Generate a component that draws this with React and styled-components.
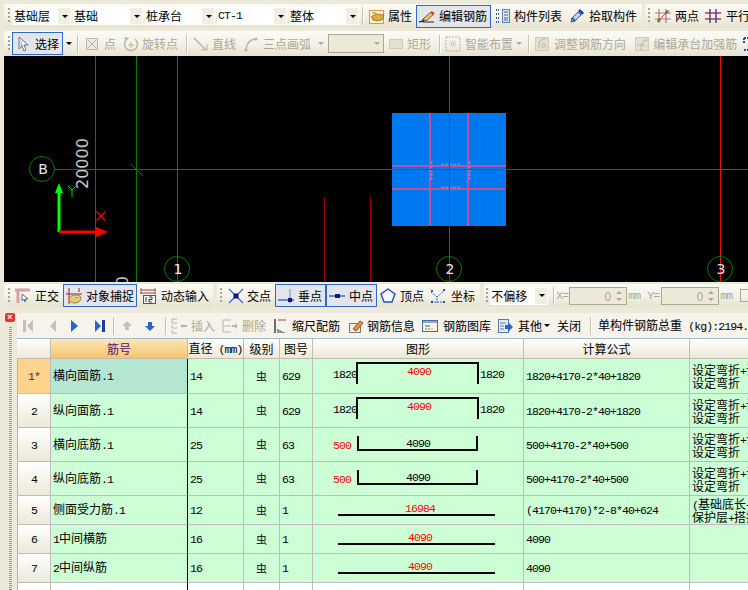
import React from "react";
import styled, { createGlobalStyle } from "styled-components";

const GlobalStyle = createGlobalStyle`
  html, body { margin: 0; padding: 0; background: #ece9d8; }
  body { font-family: "Noto Sans CJK SC", "Liberation Sans", sans-serif; font-size: 12px; color: #000; }
`;

const Page = styled.div`
  width: 748px;
  height: 590px;
  overflow: hidden;
  display: flex;
  flex-direction: column;
  background: #ece9d8;
`;

const Band = styled.div`
  height: ${(p) => p.$h}px;
  padding: ${(p) => p.$top}px 0 0 4px;
  box-sizing: border-box;
  display: flex;
  gap: ${(p) => p.$gap || 3}px;
  flex: none;
  overflow: hidden;
`;

const Group = styled.div`
  height: ${(p) => p.$h || 24}px;
  flex: ${(p) => (p.$fill ? 1 : "none")};
  min-width: 0;
  display: flex;
  align-items: center;
  padding: 0 ${(p) => p.$pr || 0}px 0 ${(p) => p.$pl ?? 4}px;
  border-radius: 3px 0 0 3px;
  background: linear-gradient(#fbfaf5, #f3f1e7 55%, #e6e2cf);
  white-space: nowrap;
  line-height: 1;
  overflow: hidden;
`;

const Grip = styled.i`
  flex: none;
  width: 2px;
  height: 16px;
  background: repeating-linear-gradient(#a8a493 0 2px, #fff0 2px 4px);
`;

const Sep = styled.i`
  flex: none;
  width: 1px;
  height: 18px;
  margin-left: ${(p) => p.$ml}px;
  background: #c5c2b2;
  box-shadow: 1px 0 0 #fff;
`;

const Tool = styled.span`
  flex: none;
  display: inline-flex;
  align-items: center;
  box-sizing: border-box;
  height: ${(p) => (p.$active ? "23px" : "auto")};
  gap: ${(p) => p.$gap ?? 4}px;
  margin-left: ${(p) => p.$ml || 0}px;
  padding: ${(p) => (p.$active ? `0 ${p.$pr || 3}px 0 ${p.$pl || 2}px` : 0)};
  color: ${(p) => (p.$off ? "#aca899" : "#000")};
  ${(p) => p.$active && "border: 1px solid #316ac5; background: #e3e5ea;"}
`;

const Caret = styled.i`
  flex: none;
  width: 0;
  height: 0;
  margin: 0 ${(p) => p.$mx ?? 2}px 0 ${(p) => (p.$ml || 0) + 2}px;
  border: 3px solid transparent;
  border-top: 3px solid ${(p) => (p.$off ? "#aca899" : "#000")};
  border-bottom: 0;
`;

const Combo = styled.span`
  flex: none;
  box-sizing: border-box;
  width: ${(p) => p.$w}px;
  height: 18px;
  margin-left: ${(p) => p.$ml || 0}px;
  display: flex;
  align-items: center;
  justify-content: space-between;
  background: #fff;
  padding-left: 1px;
  font-size: 12px;
`;

const ComboBtn = styled.span`
  flex: none;
  width: 12px;
  height: 16px;
  margin-right: 1px;
  background: #f0eee2;
  display: flex;
  align-items: center;
  justify-content: center;
`;

const OffCombo = styled.span`
  flex: none;
  box-sizing: border-box;
  width: 56px;
  height: 19px;
  margin-left: ${(p) => p.$ml || 0}px;
  border: 1px solid #aca899;
  background: #ece9d8;
  display: flex;
  align-items: center;
  justify-content: flex-end;
  padding-right: 1px;
`;

const Latin = styled.span`
  font-family: "Liberation Mono", monospace;
  font-size: 11.5px;
  letter-spacing: -0.9px;
`;

const Spin = styled.span`
  flex: none;
  box-sizing: border-box;
  width: 58px;
  height: 18px;
  margin-left: ${(p) => p.$ml}px;
  border: 1px solid #aca899;
  background: #ece9d8;
  color: #aca899;
  display: flex;
  align-items: center;
  justify-content: flex-end;
  gap: 5px;
  padding-right: 4px;
`;

const SpinBtns = styled.span`
  display: flex;
  flex-direction: column;
  gap: 4px;
`;

const SpinUp = styled.i`
  display: block;
  width: 0;
  height: 0;
  border: 3px solid transparent;
  border-bottom: 3px solid #aca899;
  border-top: 0;
`;

const SpinDown = styled(SpinUp)`
  transform: scaleY(-1);
`;

const OffLabel = styled(Latin)`
  flex: none;
  color: #aca899;
  margin-left: ${(p) => p.$ml || 0}px;
`;

const CheckBox = styled.i`
  flex: none;
  width: 11px;
  height: 11px;
  margin-left: ${(p) => p.$ml}px;
  border: 1px solid #aca899;
`;

const Canvas = styled.svg`
  display: block;
  flex: none;
  margin-left: 4px;
`;

const Panel = styled.div`
  flex: 1;
  min-height: 0;
  display: flex;
`;

const Side = styled.div`
  width: 17px;
  flex: none;
  display: flex;
  flex-direction: column;
  align-items: center;
  padding: 3px 0 0 3px;
  box-sizing: border-box;
  gap: 5px;
`;

const CloseBox = styled.span`
  width: 10px;
  height: 9px;
  border-radius: 2px;
  background: #e8352a;
  color: #fff;
  font: bold 9px/9px "Liberation Sans", sans-serif;
  text-align: center;
`;

const SideGrip = styled.i`
  flex: 1;
  width: 3px;
  background: repeating-linear-gradient(#9c9888 0 1px, #fff0 1px 2px);
`;

const Main = styled.div`
  flex: 1;
  min-width: 0;
  display: flex;
  flex-direction: column;
  margin-top: 3px;
  background: #f5f3ea;
`;

const PanelBar = styled.div`
  height: 25px;
  flex: none;
  display: flex;
  align-items: center;
  padding-left: 3px;
  white-space: nowrap;
  overflow: hidden;
  line-height: 1;
`;

const Table = styled.div`
  flex: 1;
  display: grid;
  grid-template-columns: 34px 137px 56px 36px 33px 211px 166px 300px;
  grid-template-rows: 20px 35px 34px 34px 34px 29px 29px 29px 34px;
  background: #fff;
  border-top: 1px solid #a9b8c6;
  overflow: hidden;
  line-height: 1;
`;

const HeadCell = styled.div`
  box-sizing: border-box;
  display: flex;
  align-items: center;
  justify-content: center;
  border-right: 1px solid #c0bdae;
  border-bottom: 1px solid #c0bdae;
  color: ${(p) => (p.$on ? "#5a0a80" : "#000")};
  background: ${(p) =>
    p.$on ? "linear-gradient(#fbe6b8, #f6c56e)" : "linear-gradient(#fff, #ece9d8)"};
`;

const RowHead = styled.div`
  box-sizing: border-box;
  display: flex;
  align-items: center;
  justify-content: center;
  border-left: 1px solid #b5b5b5;
  border-right: 1px solid #bdbdbd;
  border-bottom: 1px solid #bdbdbd;
  color: ${(p) => (p.$on ? "#5a0a80" : "#000")};
  background: ${(p) => (p.$on ? "#fdd48a" : "linear-gradient(#fff, #ece9d8)")};
`;

const Cell = styled.div`
  box-sizing: border-box;
  display: flex;
  align-items: center;
  justify-content: ${(p) => (p.$center ? "center" : "flex-start")};
  padding-left: ${(p) => p.$pl ?? 2}px;
  border-right: 1px solid ${(p) => (p.$edge ? "#000" : "#bdbdbd")};
  border-bottom: 1px solid #bdbdbd;
  background: ${(p) => (p.$sel ? "#b4e6d2" : p.$blank ? "#fff" : "#ccffd6")};
  overflow: hidden;
  white-space: nowrap;
`;

const Grade = styled.span`
  font-size: 11px;
  line-height: 1;
`;

const NoteLines = styled.div`
  display: flex;
  flex-direction: column;
`;

const NoteLine = styled.span`
  display: block;
  height: 13px;
  line-height: 13px;
  white-space: nowrap;
`;

const FigureSvg = styled.svg`
  display: block;
  align-self: flex-start;
  flex: none;
`;

const Mix = ({ children }) => (
  <span>
    {String(children)
      .split(/([\x00-\x7f]+)/)
      .filter(Boolean)
      .map((s, i) => (/^[\x00-\x7f]/.test(s) ? <Latin key={i}>{s}</Latin> : <span key={i}>{s}</span>))}
  </span>
);

const Ico = ({ children, w = 16, h = 16 }) => (
  <svg width={w} height={h} viewBox="0 0 16 16" style={{ flex: "none", display: "block" }}>
    {children}
  </svg>
);

const G = "#b9b6a8";

const icons = {
  attr: (
    <Ico>
      <rect x="0.5" y="2.5" width="14" height="13" fill="#fdf2cf" stroke="#e0953a" />
      <path d="M2 9l5-3 8 1-2 5-6 1z" fill="#e2b040" stroke="#8a6a20" strokeWidth="0.8" />
      <path d="M3 5h4M3 12h3" stroke="#b07820" />
    </Ico>
  ),
  edit: (
    <Ico>
      <path d="M0 14c2-1 3-1 5 0l3 0h7" stroke="#222" strokeWidth="1.2" fill="none" />
      <path d="M4 11l8-7 3 2-8 7z" fill="#eec070" stroke="#7a5a30" />
      <path d="M12 4l3 2" stroke="#d04040" strokeWidth="2.4" />
      <path d="M4 11l-2 3 4-1z" fill="#333" />
    </Ico>
  ),
  list: (
    <Ico>
      <path d="M1 2h3M1 6h3M1 10h3M1 14h3" stroke="#3a5a80" strokeWidth="2" strokeDasharray="1 1" />
      <rect x="7.5" y="1.5" width="7" height="13" fill="#dbe8f8" stroke="#5a80b0" />
      <path d="M9 4h4M9 7h4M9 10h4M9 12h4" stroke="#3a60a0" />
    </Ico>
  ),
  picker: (
    <Ico>
      <path d="M2 14l1-4 6-6 3 3-6 6z" fill="#bcd4f4" stroke="#2a56b0" />
      <path d="M9 3l2-2 4 4-2 2z" fill="#1a3f9a" />
      <path d="M3 10l3 3" stroke="#2a56b0" strokeWidth="2" />
    </Ico>
  ),
  two: (
    <Ico>
      <path d="M0 5h16M0 11h16" stroke="#8a8ab0" />
      <path d="M4 1v14M11 1v14" stroke="#c85050" />
      <path d="M2 14L14 2" stroke="#c04040" />
      <circle cx="4" cy="12" r="1.6" fill="#3a8a2a" />
      <circle cx="12" cy="4" r="1.6" fill="#3a8a2a" />
    </Ico>
  ),
  parallel: (
    <Ico>
      <path d="M0 5h16M0 11h16" stroke="#d03040" strokeWidth="1.4" />
      <path d="M5 1v14M11 1v14" stroke="#3040a0" strokeWidth="1.4" />
    </Ico>
  ),
  cursor: (
    <Ico>
      <path d="M5 1v12l3-3 2 5 2-1-2-5h4z" fill="#fff" stroke="#6a7080" />
      <path d="M7 5v5l2-1" stroke="#8aa0c0" fill="none" />
    </Ico>
  ),
  point: (
    <Ico>
      <rect x="2.5" y="2.5" width="11" height="11" fill="#eceae0" stroke={G} />
      <path d="M4 4l8 8M12 4l-8 8" stroke={G} />
    </Ico>
  ),
  rotate: (
    <Ico>
      <path d="M3 4A6.5 6.5 0 1 0 12 3" fill="none" stroke={G} strokeWidth="1.5" />
      <path d="M1 1l2 4 3-3z" fill={G} />
      <path d="M8 6v6M5 9h6" stroke={G} />
    </Ico>
  ),
  line: (
    <Ico>
      <path d="M1 2l12 12" stroke={G} strokeWidth="1.5" />
      <path d="M14 8v6H8" stroke={G} fill="none" />
    </Ico>
  ),
  arc: (
    <Ico>
      <path d="M3 14C3 8 7 3 13 3" stroke={G} strokeWidth="1.5" fill="none" />
      <circle cx="3" cy="14" r="1.6" fill={G} />
      <circle cx="13" cy="3" r="1.6" fill={G} />
    </Ico>
  ),
  rect: (
    <Ico>
      <rect x="1.5" y="3.5" width="13" height="9" fill="#e3e0d2" stroke="#cfccbd" />
    </Ico>
  ),
  smart: (
    <Ico>
      <rect x="1" y="1" width="14" height="14" fill="none" stroke={G} strokeDasharray="2 1" />
      <path d="M8 4v8M4 8h8M5 5l6 6M11 5l-6 6" stroke={G} strokeDasharray="1 1" />
    </Ico>
  ),
  adjust: (
    <Ico>
      <rect x="1.5" y="1.5" width="13" height="13" fill="#e3e0d2" stroke="#cfccbd" />
      <path d="M5 12V6l4-3h3M8 12a3 3 0 0 0 3-4H8v3" fill="none" stroke={G} />
    </Ico>
  ),
  strong: (
    <Ico>
      <rect x="1.5" y="1.5" width="13" height="13" fill="#e3e0d2" stroke="#cfccbd" />
      <path d="M14 4C9 4 7 7 7 14M3 9h8" fill="none" stroke={G} />
    </Ico>
  ),
  corner: (
    <Ico>
      <path d="M2 2h5M2 2v5M2 14h5" stroke="#2a50c0" strokeWidth="2" strokeDasharray="2 1" fill="none" />
    </Ico>
  ),
  ortho: (
    <Ico>
      <path d="M0 2h15M3 2v13" stroke="#d8a0a0" strokeWidth="3" />
      <path d="M7 6v7l2-2 1 3 1-1-1-2h3z" fill="#fff" stroke="#5a6a8a" />
    </Ico>
  ),
  snap: (
    <Ico>
      <path d="M3 0v16M13 0v4M0 6h16" stroke="#8a2a2a" />
      <path d="M3 11c1-4 7-5 11-3 2 3 0 7-5 7-3 0-6-1-6-4z" fill="#e6c878" stroke="#a08030" />
      <path d="M7 10c2-1 4-2 6-1" stroke="#fff" />
    </Ico>
  ),
  dyn: (
    <Ico>
      <path d="M0 2h16M0 5h16" stroke="#a04040" />
      <path d="M1 0v6M15 0v6" stroke="#777" />
      <rect x="3.5" y="7.5" width="12" height="8" fill="#fff" stroke="#555" />
      <path d="M6 9v5M9 9h3v2.5H9V14h3" stroke="#333" fill="none" />
    </Ico>
  ),
  cross: (
    <Ico>
      <path d="M1 1l14 14M15 1L1 15" stroke="#2e6fc8" strokeWidth="1.2" />
      <rect x="5.5" y="5.5" width="5" height="5" fill="#14148c" />
    </Ico>
  ),
  perp: (
    <Ico>
      <path d="M0 12h16" stroke="#2e6fc8" strokeWidth="1.4" />
      <path d="M12 1v14" stroke="#5a8fd0" />
      <rect x="10" y="10" width="4" height="4" fill="#14148c" />
    </Ico>
  ),
  mid: (
    <Ico>
      <path d="M0 8h16" stroke="#2e6fc8" strokeWidth="1.4" />
      <rect x="6" y="6" width="5" height="4" fill="#14148c" />
    </Ico>
  ),
  vertex: (
    <Ico>
      <path d="M8 1l7 5-3 8H4L1 6z" fill="#f4f7ff" stroke="#1f4fb0" strokeWidth="1.4" />
    </Ico>
  ),
  coord: (
    <Ico>
      <path d="M1 4l6 5v6M7 9l8-7M1 14h13" stroke="#2e6fc8" strokeDasharray="2 1" fill="none" />
      <circle cx="2" cy="3" r="1" fill="#14148c" />
      <circle cx="14" cy="2" r="1" fill="#14148c" />
      <circle cx="2" cy="14" r="1" fill="#14148c" />
      <circle cx="14" cy="14" r="1" fill="#14148c" />
    </Ico>
  ),
  first: (
    <Ico>
      <path d="M3 2h3v12H3z" fill="#c4c2b6" />
      <path d="M13 2v12L7 8z" fill="#c4c2b6" />
    </Ico>
  ),
  prev: (
    <Ico>
      <path d="M11 2v12L5 8z" fill="#c4c2b6" />
    </Ico>
  ),
  next: (
    <Ico>
      <path d="M4 2v12l7-6z" fill="#2a62d0" />
    </Ico>
  ),
  last: (
    <Ico>
      <path d="M3 2v12l6-6z" fill="#2a62d0" />
      <path d="M10 2h3v12h-3z" fill="#1a3f9a" />
    </Ico>
  ),
  up: (
    <Ico>
      <path d="M8 3l5 5h-3v4H6V8H3z" fill="#c4c2b6" />
    </Ico>
  ),
  down: (
    <Ico>
      <path d="M8 13l5-5h-3V4H6v4H3z" fill="#2f63c8" />
    </Ico>
  ),
  insert: (
    <Ico>
      <path d="M6 1H1v4h5M1 7v3h5M6 15H1v-3" fill="none" stroke={G} />
      <path d="M9 8l3-2v4zM12 7h4v2h-4z" fill={G} />
    </Ico>
  ),
  remove: (
    <Ico>
      <path d="M1 2h8M1 8h8M1 14h8M1 2v12" fill="none" stroke={G} />
      <path d="M10 7h3V5l3 3-3 3V9h-3z" fill={G} />
    </Ico>
  ),
  scale: (
    <Ico>
      <path d="M2 1v14" stroke="#333" strokeWidth="1.4" />
      <path d="M5 2h8" stroke="#a04040" />
      <path d="M5 15v-4M7 15v-3M9 15v-2M11 15v-1" stroke="#555" strokeWidth="1.2" />
    </Ico>
  ),
  info: (
    <Ico>
      <rect x="1.5" y="5.5" width="11" height="9" fill="#f4efe0" stroke="#777" />
      <path d="M5 11l7-8 3 2-7 8z" fill="#e09040" stroke="#8a5a20" />
    </Ico>
  ),
  lib: (
    <Ico>
      <rect x="0.5" y="2.5" width="15" height="11" fill="#f6f6ef" stroke="#4a6aa0" />
      <path d="M1 3h14v2H1z" fill="#8aa8d8" />
      <path d="M3 8h5" stroke="#555" />
      <path d="M3 11h2" stroke="#d03030" />
      <path d="M6 11h2" stroke="#30a030" />
      <path d="M9 11h2" stroke="#d0a030" />
    </Ico>
  ),
  other: (
    <Ico>
      <rect x="1.5" y="1.5" width="10" height="13" fill="#e4ecf8" stroke="#5a7ab0" />
      <path d="M3 5h6M3 8h4M3 11h4" stroke="#5a7ab0" />
      <path d="M8 7h3V4l5 5-5 5v-3H8z" fill="#2f63c8" />
    </Ico>
  ),
};

const Label = ({ children }) => <span>{children}</span>;

const CanvasDrawing = () => {
  const bubble = (cx, cy, t) => (
    <g key={t}>
      <circle cx={cx} cy={cy} r="12.5" fill="none" stroke="#0a7a0a" />
      <text x={cx + 1} y={cy + 5} textAnchor="middle" fontFamily="DejaVu Sans" fontSize="14" fill="#e8e8e8">
        {t}
      </text>
    </g>
  );
  return (
    <Canvas width="744" height="226" viewBox="4 56 744 226">
      <rect x="4" y="56" width="744" height="226" fill="#000" />
      <path d="M95.5 56v226M136.5 56v226M54 169.5h123" stroke="#0a7a0a" shapeRendering="crispEdges" />
      <path d="M131 164l12 12" stroke="#0a7a0a" />
      <path d="M324.5 197v85M370.5 197v85" stroke="#a00000" shapeRendering="crispEdges" />
      <rect x="392" y="113" width="114" height="113" fill="#0078f0" />
      <path d="M430 113v113M468 113v113M392 166h114M392 189h113" stroke="#c24f9e" strokeWidth="2" />
      <path d="M431.5 161v19M469.5 161v19M441 164.5h19M441 187.5h19" stroke="#7f87a8" strokeWidth="2" strokeDasharray="3 1" />
      <path d="M177.5 56v226M449.5 56v226M720.5 56v226M177 169.5h571" stroke="#e81010" shapeRendering="crispEdges" />
      {bubble(42, 169, "B")}
      {bubble(177, 269, "1")}
      {bubble(449, 269, "2")}
      {bubble(720, 269, "3")}
      <text transform="translate(88 189) rotate(-90)" fontFamily="DejaVu Sans" fontSize="16" fill="#c8c8c8">
        20000
      </text>
      <text transform="translate(128 276) rotate(-90)" textAnchor="end" fontFamily="DejaVu Sans" fontSize="16" fill="#c8c8c8">
        20000
      </text>
      <path d="M59 232v-40" stroke="#00ff00" strokeWidth="3" />
      <path d="M59 183l4 10h-8z" fill="#00ff00" />
      <path d="M68 186l4 4 5-5M72 190v7" stroke="#00e000" fill="none" />
      <path d="M59 232h37" stroke="#ff0000" strokeWidth="3" />
      <path d="M96 227l12 5-12 5z" fill="#ff0000" />
      <path d="M96.5 211.5l9 9M105.5 211.5l-9 9" stroke="#ff0000" strokeWidth="1.2" />
    </Canvas>
  );
};

const SvgLabel = ({ x, y, red, anchor, children }) => (
  <text
    x={x}
    y={y}
    textAnchor={anchor || "middle"}
    fontFamily="Liberation Mono, monospace"
    fontSize="11.5"
    letterSpacing="-0.9"
    fill={red ? "#f00" : "#000"}
  >
    {children}
  </text>
);

// coordinates are relative to the figure cell
const Figure = ({ kind, mid, midRed, side, sideRed }) => (
  <FigureSvg width="210" height="34">
    {kind === "top" && (
      <>
        <path d="M44 25V4h121v21" fill="none" stroke="#000" strokeWidth="2" />
        <SvgLabel x={20} y={19} anchor="start">{side}</SvgLabel>
        <SvgLabel x={167} y={19} anchor="start">{side}</SvgLabel>
        <SvgLabel x={106} y={16} red>{mid}</SvgLabel>
      </>
    )}
    {kind === "bottom" && (
      <>
        <path d="M45 8v14h119V8" fill="none" stroke="#000" strokeWidth="2" />
        <SvgLabel x={20} y={21} anchor="start" red={sideRed}>{side}</SvgLabel>
        <SvgLabel x={105} y={19}>{mid}</SvgLabel>
      </>
    )}
    {kind === "flat" && (
      <>
        <path d="M25 19h157" fill="none" stroke="#000" strokeWidth="2" />
        <SvgLabel x={107} y={16} red={midRed}>{mid}</SvgLabel>
      </>
    )}
  </FigureSvg>
);

const bendNote = ["设定弯折+设定弯折", "设定弯折"];

const rows = [
  { no: "1*", name: "横向面筋.1", d: "14", fig: "629", shape: { kind: "top", mid: "4090", side: "1820" }, calc: "1820+4170-2*40+1820", note: bendNote },
  { no: "2", name: "纵向面筋.1", d: "14", fig: "629", shape: { kind: "top", mid: "4090", side: "1820" }, calc: "1820+4170-2*40+1820", note: bendNote },
  { no: "3", name: "横向底筋.1", d: "25", fig: "63", shape: { kind: "bottom", mid: "4090", side: "500", sideRed: true }, calc: "500+4170-2*40+500", note: bendNote },
  { no: "4", name: "纵向底筋.1", d: "25", fig: "63", shape: { kind: "bottom", mid: "4090", side: "500", sideRed: true }, calc: "500+4170-2*40+500", note: bendNote },
  { no: "5", name: "侧面受力筋.1", d: "12", fig: "1", shape: { kind: "flat", mid: "16984", midRed: true }, calc: " (4170+4170)*2-8*40+624", note: [" (基础底长+", "保护层+搭接"] },
  { no: "6", name: "1中间横筋", d: "16", fig: "1", shape: { kind: "flat", mid: "4090", midRed: true }, calc: "4090" },
  { no: "7", name: "2中间纵筋", d: "16", fig: "1", shape: { kind: "flat", mid: "4090", midRed: true }, calc: "4090" },
];

const headers = ["直径 (mm)", "级别", "图号", "图形", "计算公式", "公式描述"];

export default function App() {
  return (
    <Page>
      <GlobalStyle />
      <Band $h={30} $top={4}>
        <Group $pr={5}>
          <Grip />
          <Combo $w={58} $ml={3}>基础层<ComboBtn><Caret $mx={0} /></ComboBtn></Combo>
          <Combo $w={70} $ml={2}>基础<ComboBtn><Caret $mx={0} /></ComboBtn></Combo>
          <Combo $w={70} $ml={2}>桩承台<ComboBtn><Caret $mx={0} /></ComboBtn></Combo>
          <Combo $w={70} $ml={2}><Latin>CT-1</Latin><ComboBtn><Caret $mx={0} /></ComboBtn></Combo>
          <Combo $w={70} $ml={2}>整体<ComboBtn><Caret $mx={0} /></ComboBtn></Combo>
          <Sep $ml={3} />
          <Tool $ml={6} $gap={3}>{icons.attr}<Label>属性</Label></Tool>
          <Tool $ml={4} $active>{icons.edit}<Label>编辑钢筋</Label></Tool>
          <Tool $ml={4} $gap={3}>{icons.list}<Label>构件列表</Label></Tool>
          <Tool $ml={7}>{icons.picker}<Label>拾取构件</Label></Tool>
        </Group>
        <Group $fill $pl={3}>
          <Grip />
          <Tool $ml={5}>{icons.two}<Label>两点</Label></Tool>
          <Tool $ml={6} $gap={5}>{icons.parallel}<Label>平行</Label></Tool>
        </Group>
      </Band>
      <Band $h={26} $top={1}>
        <Group $fill $h={25}>
          <Grip />
          <Tool $ml={2} $active $pl={1} $gap={5}>{icons.cursor}<Label>选择</Label></Tool>
          <Caret $ml={1} />
          <Sep $ml={3} />
          <Tool $off $ml={6}>{icons.point}<Label>点</Label></Tool>
          <Tool $off $ml={7} $gap={3}>{icons.rotate}<Label>旋转点</Label></Tool>
          <Sep $ml={8} />
          <Tool $off $ml={6} $gap={3}>{icons.line}<Label>直线</Label></Tool>
          <Tool $off $ml={7}>{icons.arc}<Label>三点画弧</Label></Tool>
          <Caret $off $ml={5} />
          <OffCombo $ml={2}><Caret $off /></OffCombo>
          <Tool $off $ml={4} $gap={3}>{icons.rect}<Label>矩形</Label></Tool>
          <Sep $ml={8} />
          <Tool $off $ml={5}>{icons.smart}<Label>智能布置</Label></Tool>
          <Caret $off $ml={1} />
          <Sep $ml={4} />
          <Tool $off $ml={5}>{icons.adjust}<Label>调整钢筋方向</Label></Tool>
          <Tool $off $ml={8} $gap={3}>{icons.strong}<Label>编辑承台加强筋</Label></Tool>
          <Tool $ml={5}>{icons.corner}</Tool>
        </Group>
      </Band>
      <CanvasDrawing />
      <Band $h={28} $top={2} $gap={4}>
        <Group $pr={4} $h={23}>
          <Grip />
          <Tool $ml={5}>{icons.ortho}<Label>正交</Label></Tool>
          <Tool $ml={4} $active $pr={2}>{icons.snap}<Label>对象捕捉</Label></Tool>
          <Tool $ml={3} $gap={5}>{icons.dyn}<Label>动态输入</Label></Tool>
        </Group>
        <Group $pr={5} $h={23} $pl={3}>
          <Grip />
          <Tool $ml={6} $gap={3}>{icons.cross}<Label>交点</Label></Tool>
          <Tool $ml={4} $active>{icons.perp}<Label>垂点</Label></Tool>
          <Tool $active>{icons.mid}<Label>中点</Label></Tool>
          <Tool $ml={3}>{icons.vertex}<Label>顶点</Label></Tool>
          <Tool $ml={6} $gap={5}>{icons.coord}<Label>坐标</Label></Tool>
        </Group>
        <Group $fill $h={23} $pl={2}>
          <Grip />
          <Combo $w={58} $ml={2}>不偏移<ComboBtn><Caret $mx={0} /></ComboBtn></Combo>
          <Sep $ml={5} />
          <OffLabel $ml={2}>X=</OffLabel>
          <Spin $ml={1}>0<SpinBtns><SpinUp /><SpinDown /></SpinBtns></Spin>
          <OffLabel $ml={1}>mm</OffLabel>
          <OffLabel $ml={7}>Y=</OffLabel>
          <Spin $ml={2}>0<SpinBtns><SpinUp /><SpinDown /></SpinBtns></Spin>
          <OffLabel $ml={1}>mm</OffLabel>
          <CheckBox $ml={8} />
        </Group>
      </Band>
      <Panel>
        <Side>
          <CloseBox>×</CloseBox>
          <SideGrip />
        </Side>
        <Main>
          <PanelBar>
            <Tool>{icons.first}</Tool>
            <Tool $ml={9}>{icons.prev}</Tool>
            <Tool $ml={6}>{icons.next}</Tool>
            <Tool $ml={9}>{icons.last}</Tool>
            <Sep $ml={5} />
            <Tool $ml={5}>{icons.up}</Tool>
            <Tool $ml={7}>{icons.down}</Tool>
            <Sep $ml={7} />
            <Tool $off $ml={5}>{icons.insert}<Label>插入</Label></Tool>
            <Tool $off $ml={7}>{icons.remove}<Label>删除</Label></Tool>
            <Tool $ml={7} $gap={3}>{icons.scale}<Label>缩尺配筋</Label></Tool>
            <Tool $ml={8} $gap={3}>{icons.info}<Label>钢筋信息</Label></Tool>
            <Tool $ml={7} $gap={5}>{icons.lib}<Label>钢筋图库</Label></Tool>
            <Tool $ml={6} $gap={5}>{icons.other}<Label>其他</Label></Tool>
            <Caret $ml={0} />
            <Tool $ml={5}><Label>关闭</Label></Tool>
            <Sep $ml={9} />
            <Tool $ml={7} $gap={0}><Mix>单构件钢筋总重 (kg):2194.286</Mix></Tool>
          </PanelBar>
          <Table>
            <HeadCell />
            <HeadCell $on>筋号</HeadCell>
            {headers.map((h) => (
              <HeadCell key={h}><Mix>{h}</Mix></HeadCell>
            ))}
            {rows.map((r, i) => (
              <React.Fragment key={r.no}>
                <RowHead $on={i === 0}><Mix>{r.no}</Mix></RowHead>
                <Cell $sel={i === 0} $edge><Mix>{r.name}</Mix></Cell>
                <Cell><Mix>{r.d}</Mix></Cell>
                <Cell $center $pl={0}><Grade>虫</Grade></Cell>
                <Cell><Mix>{r.fig}</Mix></Cell>
                <Cell $pl={0}><Figure {...r.shape} /></Cell>
                <Cell><Mix>{r.calc}</Mix></Cell>
                <Cell>
                  {r.note && (
                    <NoteLines>
                      {r.note.map((line) => (
                        <NoteLine key={line}><Mix>{line}</Mix></NoteLine>
                      ))}
                    </NoteLines>
                  )}
                </Cell>
              </React.Fragment>
            ))}
            <RowHead><Mix>8</Mix></RowHead>
            <Cell $blank $edge />
            <Cell $blank />
            <Cell $blank />
            <Cell $blank />
            <Cell $blank />
            <Cell $blank />
            <Cell $blank />
          </Table>
        </Main>
      </Panel>
    </Page>
  );
}
